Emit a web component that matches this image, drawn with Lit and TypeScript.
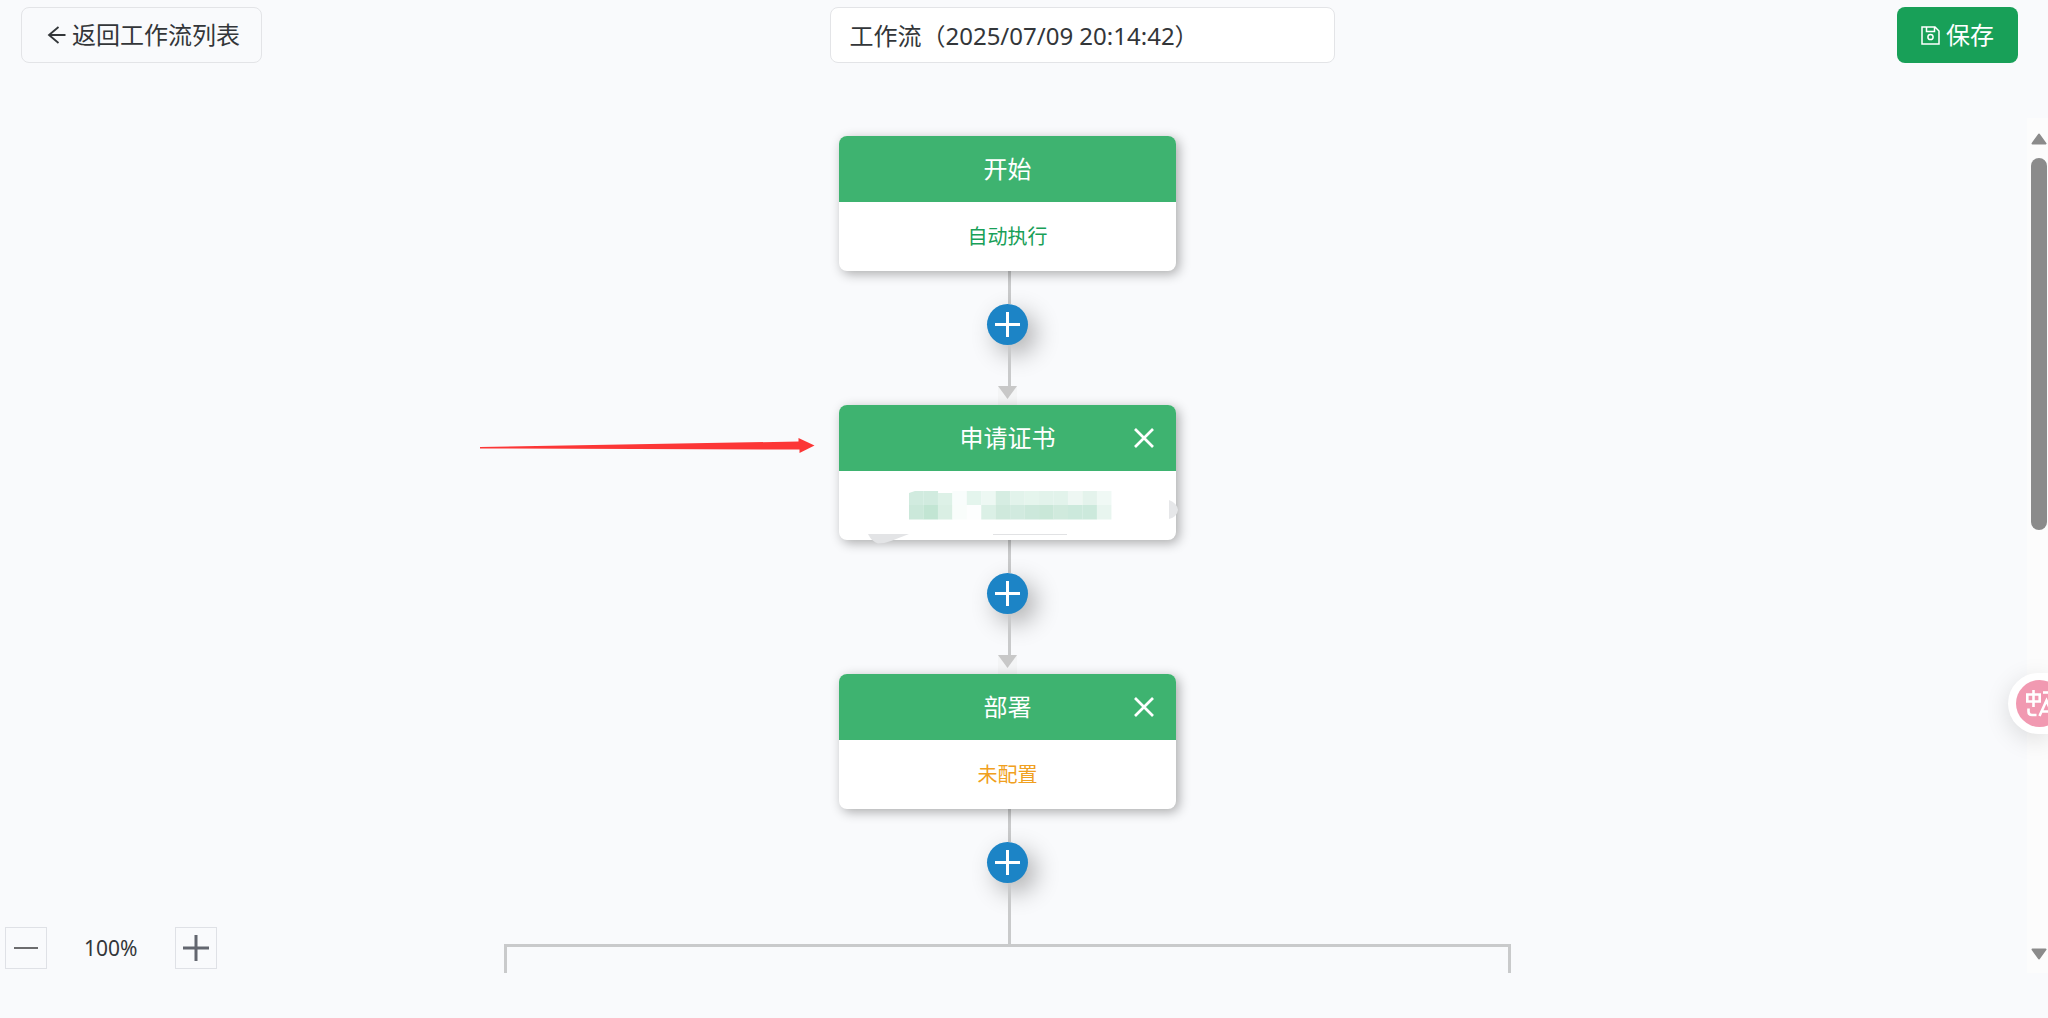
import { LitElement, html, svg, css, nothing } from "lit";
import { customElement, property, state } from "lit/decorators.js";

const FONT = css`"Noto Sans", "Noto Sans CJK SC", sans-serif`;

const MASK_TOP = [
  "#d1ebdf", "#d1ebdf", "#ddf1e7", "#f9fdfc", "#e4f5ed", "#edf8f3", "#d6ede2",
  "#e2f3eb", "#e5f5ed", "#e2f3eb", "#e2f3eb", "#eef7f3", "#e4f3ec", "#f0f9f5",
];
const MASK_BOTTOM = [
  "#cbe8da", "#c2e5d3", "#daefe4", "#f9fdfb", "#fdfefe", "#dbf0e6", "#cfe9dc",
  "#d1eadf", "#cce8db", "#c9e7d8", "#d0eadd", "#cce9dc", "#cce9dc", "#e8f5ef",
];

@customElement("flow-node")
export class FlowNode extends LitElement {
  @property() heading = "";
  @property() summary = "";
  @property() tone: "success" | "warning" = "success";
  @property({ type: Boolean }) closable = false;
  @property({ type: Boolean }) masked = false;

  static styles = css`
    :host {
      display: block;
      position: relative;
      width: 337px;
      font-family: ${FONT};
    }
    .card {
      border-radius: 8px;
      background: #fff;
      box-shadow: 3px 3px 12px rgba(0, 0, 0, 0.32);
    }
    .head {
      display: grid;
      grid-template-columns: 1fr auto 1fr;
      align-items: center;
      height: 66px;
      padding: 0 22px;
      border-radius: 8px 8px 0 0;
      background: #3eb370;
      color: #fff;
    }
    .title {
      grid-column: 2;
      margin: 0;
      font-size: 24px;
      font-weight: 400;
      line-height: 36px;
    }
    .close {
      justify-self: end;
      display: flex;
      padding: 0;
      border: 0;
      background: none;
      color: inherit;
      cursor: pointer;
    }
    .body {
      display: flex;
      align-items: center;
      justify-content: center;
      height: 69px;
      font-size: 20px;
      line-height: 30px;
    }
    .success {
      color: #18a058;
    }
    .warning {
      color: #f0a020;
    }
    .mask {
      position: absolute;
      left: 0;
      top: 0;
      pointer-events: none;
      overflow: visible;
    }
  `;

  private mask() {
    const cell = (fill: string, i: number, y: number, h: number) =>
      svg`<rect x=${70 + i * 14.45} y=${y} width="14.6" height=${h} fill=${fill} />`;
    return html`<svg class="mask" width="337" height="135" viewBox="0 0 337 135" aria-hidden="true">
      ${MASK_TOP.map((c, i) => cell(c, i, i === 2 ? 88 : 86, i === 2 ? 12 : 14))}
      ${MASK_BOTTOM.map((c, i) => cell(c, i, 100, 14.5))}
      <path d="M70 86h6l-6 2z" fill="#fff" />
      <path d="M29 129h41l-18 7q-7 2.500-13 2.500-6-1.500-10-9.500z" fill="#e3e4e6" />
      <path d="M154 129.500h74" stroke="#e1e2e4" />
      <path d="M330 95q8 3 9 10-1 7-9 9z" fill="#e6e7e9" />
    </svg>`;
  }

  render() {
    return html`
      <section class="card">
        <header class="head">
          <h2 class="title">${this.heading}</h2>
          ${this.closable
            ? html`<button class="close" aria-label="删除">
                <svg width="20" height="20" viewBox="0 0 20 20">
                  <path d="M1 1L19 19M19 1L1 19" stroke="currentColor" stroke-width="2.700" />
                </svg>
              </button>`
            : nothing}
        </header>
        <div class="body ${this.tone}">${this.summary}</div>
      </section>
      ${this.masked ? this.mask() : nothing}
      <slot></slot>
    `;
  }
}

@customElement("flow-link")
export class FlowLink extends LitElement {
  @property({ type: Boolean }) arrow = false;

  static styles = css`
    :host {
      display: flex;
      flex-direction: column;
      align-items: center;
    }
    .line {
      width: 3px;
      margin-left: 3px;
      background: #c9cacb;
    }
    .before {
      height: 33px;
    }
    .after {
      height: 41px;
    }
    .long {
      height: 61px;
    }
    .add {
      display: flex;
      align-items: center;
      justify-content: center;
      width: 41px;
      height: 41px;
      padding: 0;
      border: 0;
      border-radius: 50%;
      background: #1c84c6;
      box-shadow: 8px 9px 24px rgba(0, 0, 0, 0.3);
      cursor: pointer;
    }
    .tip {
      display: block;
      background: #f4f5f6;
    }
  `;

  render() {
    return html`
      <div class="line before"></div>
      <button class="add" aria-label="添加节点">
        <svg width="25" height="25" viewBox="0 0 25 25">
          <path d="M12.500 0V25M0 12.500H25" stroke="#fff" stroke-width="3" />
        </svg>
      </button>
      <div class="line ${this.arrow ? "after" : "long"}"></div>
      ${this.arrow
        ? html`<svg class="tip" width="19" height="19" viewBox="0 0 19 19">
            <path d="M0 0H19L9.500 13z" fill="#c8c8c8" />
          </svg>`
        : nothing}
    `;
  }
}

@customElement("app-root")
export class AppRoot extends LitElement {
  @state() private zoom = 100;

  static styles = css`
    :host {
      display: flex;
      flex-direction: column;
      gap: 55px;
      box-sizing: border-box;
      height: 100vh;
      padding: 7px 0 45px;
      overflow: hidden;
      position: relative;
      background: #f9fafc;
      color: #333639;
      font-family: ${FONT};
    }
    .top {
      display: grid;
      grid-template-columns: 810fr 505px 683fr;
      padding: 0 30px 0 21px;
    }
    .btn,
    .name {
      box-sizing: border-box;
      height: 56px;
      border-radius: 8px;
      font-family: inherit;
      font-size: 24px;
      line-height: 36px;
      color: inherit;
    }
    .btn {
      display: flex;
      align-items: center;
      gap: 6px;
      cursor: pointer;
    }
    .back {
      justify-self: start;
      padding: 0 21px 0 25px;
      border: 1px solid #e3e4e7;
      background: none;
    }
    .name {
      width: 100%;
      min-width: 0;
      padding: 0 18px 2px;
      border: 1px solid #e3e4e7;
      background: #fff;
      outline: none;
    }
    .save {
      justify-self: end;
      padding: 0 24px;
      border: 0;
      background: #18a058;
      color: #fff;
    }
    .stage {
      flex: 1;
      min-height: 0;
      display: flex;
      position: relative;
    }
    .canvas {
      flex: 1;
      min-width: 0;
      box-sizing: border-box;
      display: flex;
      flex-direction: column;
      align-items: center;
      padding: 18px 12px 0 0;
      overflow: hidden;
    }
    .canvas > * {
      flex-shrink: 0;
    }
    .canvas > .branch {
      flex: 1 0 0px;
      box-sizing: border-box;
      width: 50%;
      border: solid #c9cacb;
      border-width: 3px 3px 0;
    }
    .pointer {
      position: absolute;
      right: calc(100% + 24px);
      top: 32px;
    }
    .track {
      display: flex;
      flex-direction: column;
      align-items: center;
      box-sizing: border-box;
      width: 21px;
      padding: 15px 0 13px 3px;
      background: #fcfcfc;
    }
    .thumb {
      width: 16px;
      height: 45%;
      margin: 13px 0 auto;
      border-radius: 8px;
      background: #8b8b8b;
    }
    .zoom {
      position: absolute;
      left: 5px;
      bottom: 4px;
      display: flex;
      align-items: center;
      gap: 37px;
      font-size: 21px;
      line-height: 30px;
    }
    .step {
      display: flex;
      align-items: center;
      justify-content: center;
      box-sizing: border-box;
      width: 42px;
      height: 42px;
      padding: 0;
      border: 1px solid #dfe1e6;
      background: none;
      cursor: pointer;
    }
    .translate {
      position: absolute;
      right: 0;
      top: 673px;
      box-sizing: border-box;
      width: 40px;
      height: 61px;
      padding: 7px 0 7px 8px;
      border: 0;
      border-radius: 31px 0 0 31px;
      overflow: visible;
      background: #fff;
      box-shadow: 0 6px 24px rgba(0, 0, 0, 0.13);
      cursor: pointer;
    }
    .translate svg {
      display: block;
    }
  `;

  private step(delta: number) {
    this.zoom = Math.min(200, Math.max(10, this.zoom + delta));
  }

  render() {
    return html`
      <header class="top">
        <button class="btn back">
          <svg width="19" height="18" viewBox="0 0 19 18" fill="none" stroke="currentColor" stroke-width="1.800">
            <path d="M11.500 1L2 9L11.500 17M2 9H18.500" />
          </svg>
          返回工作流列表
        </button>
        <input class="name" aria-label="工作流名称" .value=${"工作流（2025/07/09 20:14:42）"} />
        <button class="btn save">
          <svg width="19" height="19" viewBox="0 0 19 19" fill="none" stroke="currentColor" stroke-width="1.500">
            <path d="M1 1H14L18 5V18H1zM5.500 1V5.500H13.500V1" />
            <circle cx="9.500" cy="11" r="2.600" />
          </svg>
          保存
        </button>
      </header>

      <main class="stage">
        <div class="canvas">
          <flow-node heading="开始" summary="自动执行"></flow-node>
          <flow-link arrow></flow-link>
          <flow-node heading="申请证书" closable masked>
            <svg class="pointer" width="335" height="17" viewBox="0 0 335 17" aria-hidden="true">
              <path d="M0 10L318.500 4.500V1L334.500 8.500L319.500 16V12.500L0 11.500z" fill="#fc3636" />
            </svg>
          </flow-node>
          <flow-link arrow></flow-link>
          <flow-node heading="部署" summary="未配置" tone="warning" closable></flow-node>
          <flow-link></flow-link>
          <div class="branch"></div>
        </div>
        <div class="track" aria-hidden="true">
          <svg width="16" height="12" viewBox="0 0 16 12">
            <path d="M8 1.500L14.500 10.500H1.500z" fill="#8b8b8b" stroke="#8b8b8b" stroke-width="2" stroke-linejoin="round" />
          </svg>
          <div class="thumb"></div>
          <svg width="16" height="12" viewBox="0 0 16 12">
            <path d="M8 10.500L14.500 1.500H1.500z" fill="#8b8b8b" stroke="#8b8b8b" stroke-width="2" stroke-linejoin="round" />
          </svg>
        </div>
        <div class="zoom">
          <button class="step" aria-label="缩小" @click=${() => this.step(-10)}>
            <svg width="24" height="24" viewBox="0 0 24 24"><path d="M0 12H24" stroke="#6c6c6e" stroke-width="2" /></svg>
          </button>
          <span>${this.zoom}%</span>
          <button class="step" aria-label="放大" @click=${() => this.step(10)}>
            <svg width="26" height="26" viewBox="0 0 26 26"><path d="M13 0V26M0 13H26" stroke="#63666f" stroke-width="3" /></svg>
          </button>
        </div>
      </main>

      <button class="translate" aria-label="翻译">
        <svg width="32" height="47" viewBox="0 0 32 47" fill="none" stroke="#fff" stroke-width="2.600">
          <circle cx="23.500" cy="23.500" r="23.500" fill="#f199b1" stroke="none" />
          <path d="M11.300 14.500H23.700V21.500H11.300zM17.500 10V27" />
          <path d="M12.500 28.500V31.500Q12.500 35 16 35H20.500" />
          <path d="M27 12.500H34" />
          <path d="M23.500 36L30.500 20.500L37 36M26.500 31.500H34" />
        </svg>
      </button>
    `;
  }
}
